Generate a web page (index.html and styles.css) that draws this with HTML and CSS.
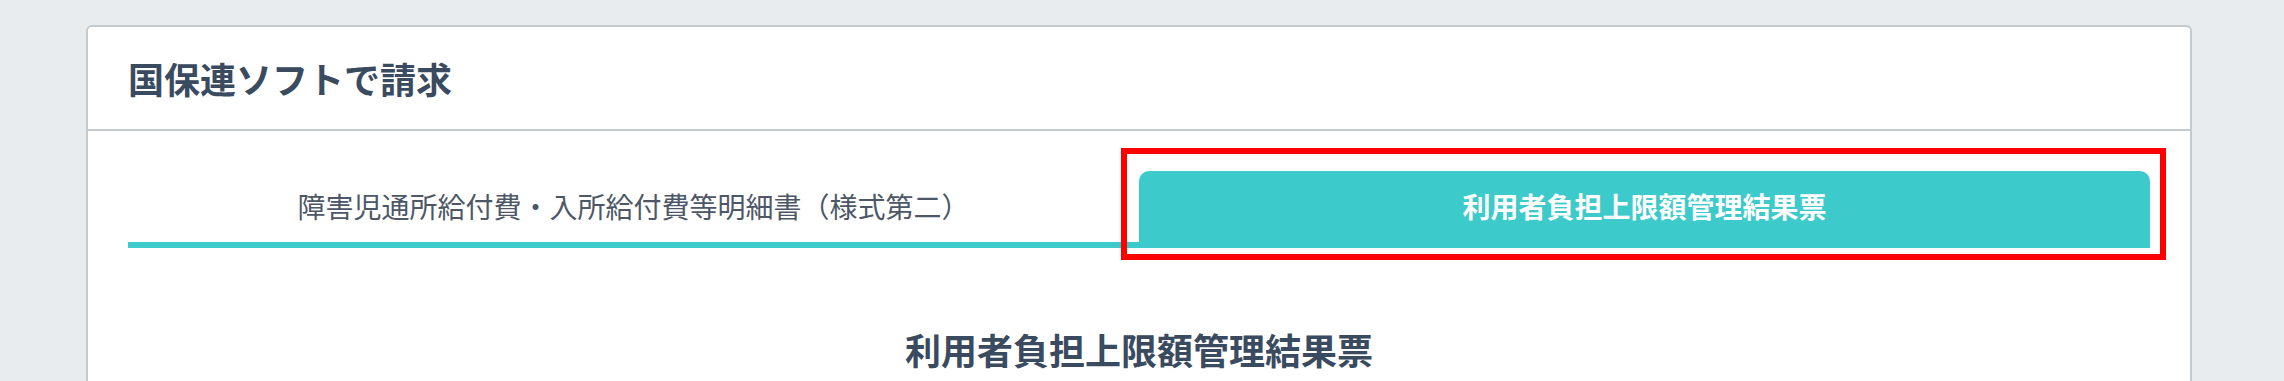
FILE: index.html
```html
<!DOCTYPE html>
<html lang="ja">
<head>
  <meta charset="UTF-8" />
  <meta name="viewport" content="width=device-width, initial-scale=1.0" />
  <title>国保連ソフトで請求</title>
  <link rel="stylesheet" href="styles.css">
</head>
<body>
  <div class="card">
    <div class="card-header">
      <h2 class="card-title">国保連ソフトで請求</h2>
    </div>

    <div class="card-body">
      <!-- Tabs -->
      <div class="tabs">
        <div class="tab">障害児通所給付費・入所給付費等明細書（様式第二）</div>
        <div class="tab active">
          利用者負担上限額管理結果票
          <span class="highlight"></span>
        </div>
      </div>

      <h3 class="section-title">利用者負担上限額管理結果票</h3>
    </div>
  </div>
</body>
</html>
```

FILE: styles.css
```css
body {
  font-family: "Noto Sans CJK JP", "Noto Sans", sans-serif;
  background-color: #e8ecef;
  margin: 0;
  padding: 25px 92px 0 86px;
  color: #3a4a5f;
  height: 100vh;
  box-sizing: border-box;
  overflow: hidden;
}

.card {
  background: #fff;
  border: 2px solid #c3cbd1;
  border-bottom: none;
  border-radius: 6px 6px 0 0;
  height: 100%;
  box-sizing: border-box;
}

.card-header {
  padding: 24px 40px;
  border-bottom: 2px solid #c3cbd1;
}

.card-title {
  margin: 0;
  font-size: 36px;
  line-height: 54px;
  font-weight: bold;
}

.card-body {
  padding: 40px 40px 0 40px;
}

.tabs {
  display: flex;
}

.tab {
  flex: 1;
  position: relative;
  text-align: center;
  font-size: 28px;
  line-height: 41px;
  padding: 15px 0;
  color: #4d5767;
  border-bottom: 6px solid #3dcaca;
}

.tab.active {
  background-color: #3dcaca;
  color: #fff;
  font-weight: bold;
  border-radius: 10px 10px 0 0;
}

.highlight {
  position: absolute;
  top: -23px;
  left: -18px;
  right: -16px;
  bottom: -18px;
  border: 6px solid #ff0000;
}

.section-title {
  margin: 74px 0 0 0;
  text-align: center;
  font-size: 36px;
  line-height: 54px;
  font-weight: bold;
}
```
